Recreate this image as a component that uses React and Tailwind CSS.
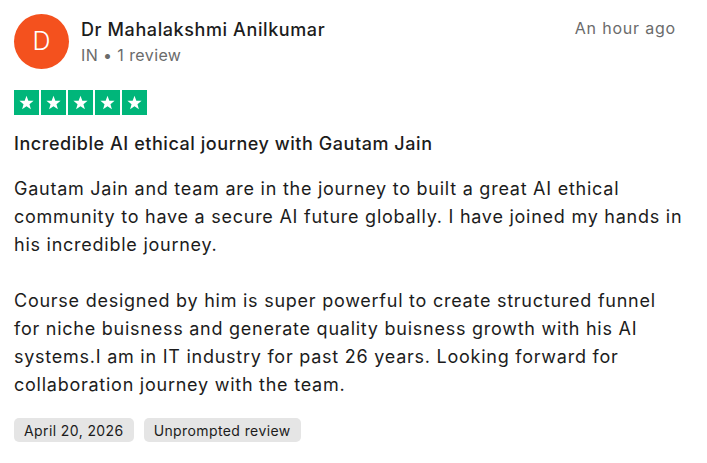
import React from "react";

function Star() {
  return (
    <svg viewBox="0 0 24 24" className="w-[17px] h-[17px]" fill="#fff">
      <path d="M12 2.5l2.6 6.9 7.4.3-5.8 4.6 2 7.1L12 17.3l-6.2 4.1 2-7.1L2 9.7l7.4-.3z" />
    </svg>
  );
}

export default function App() {
  const review = {
    name: "Dr Mahalakshmi Anilkumar",
    country: "IN",
    count: "1 review",
    time: "An hour ago",
    title: "Incredible AI ethical journey with Gautam Jain",
    body: [
      "Gautam Jain and team are in the journey to built a great AI ethical community to have a secure AI future globally. I have joined my hands in his incredible journey.",
      "Course designed by him is super powerful to create structured funnel for niche buisness and generate quality buisness growth with his AI systems.I am in IT industry for past 26 years. Looking forward for collaboration journey with the team.",
    ],
    tags: ["April 20, 2026", "Unprompted review"],
  };

  return (
    <div
      className="w-[707px] h-[463px] bg-white text-[#1c1c1c] px-[14px] pt-[14px]"
      style={{ fontFamily: "Inter, 'Noto Sans', sans-serif" }}
    >
      {/* header */}
      <div className="flex items-start justify-between">
        <div className="flex items-center gap-[12px]">
          <div className="w-[55px] h-[55px] rounded-full bg-[#f4511e] text-white flex items-center justify-center text-[25px] font-light">
            D
          </div>
          <div className="flex flex-col tracking-[0.6px]">
            <span className="text-[18px] leading-[26px] font-medium">{review.name}</span>
            <span className="text-[16px] leading-[24px] text-[#6b6b6b] tracking-[0.4px]">
              {review.country} • {review.count}
            </span>
          </div>
        </div>
        <span className="text-[16px] leading-[24px] text-[#6b6b6b] mt-[2px] mr-[17px] tracking-[0.8px]">{review.time}</span>
      </div>

      {/* stars */}
      <div className="flex gap-[2px] mt-[21px]">
        {[0, 1, 2, 3, 4].map((i) => (
          <div key={i} className="w-[25px] h-[25px] bg-[#00b67a] flex items-center justify-center">
            <Star />
          </div>
        ))}
      </div>

      <h2 className="text-[18px] leading-[26px] font-medium mt-[16px] tracking-[0.55px]">{review.title}</h2>

      <div className="mt-[18px] w-[672px] text-[18px] leading-[28px] flex flex-col gap-[28px] tracking-[0.75px]">
        {review.body.map((p, i) => (
          <p key={i}>{p}</p>
        ))}
      </div>

      <div className="flex gap-[10px] mt-[19px]">
        {review.tags.map((t) => (
          <span key={t} className="bg-[#e5e5e5] rounded-[5px] px-[10px] h-[24px] flex items-center text-[14px] tracking-[0.4px] text-[#1c1c1c]">
            {t}
          </span>
        ))}
      </div>
    </div>
  );
}
